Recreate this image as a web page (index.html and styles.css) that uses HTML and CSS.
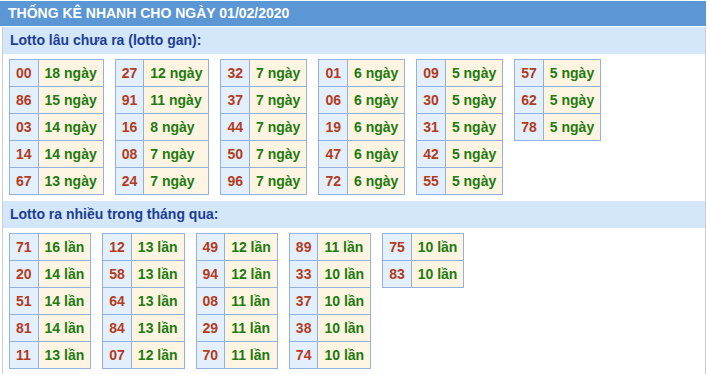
FILE: index.html
```html
<!DOCTYPE html>
<html lang="vi">
<head>
<meta charset="utf-8">
<title>Thống kê nhanh</title>
<link rel="stylesheet" href="styles.css">
</head>
<body>
<div class="header">THỐNG KÊ NHANH CHO NGÀY 01/02/2020</div>
<div class="box">
  <div class="subhead">Lotto lâu chưa ra (lotto gan):</div>
  <div class="grid">
    <table><tr><td class="n">00</td><td class="v">18 ngày</td></tr><tr><td class="n">86</td><td class="v">15 ngày</td></tr><tr><td class="n">03</td><td class="v">14 ngày</td></tr><tr><td class="n">14</td><td class="v">14 ngày</td></tr><tr><td class="n">67</td><td class="v">13 ngày</td></tr></table>
    <table><tr><td class="n">27</td><td class="v">12 ngày</td></tr><tr><td class="n">91</td><td class="v">11 ngày</td></tr><tr><td class="n">16</td><td class="v">8 ngày</td></tr><tr><td class="n">08</td><td class="v">7 ngày</td></tr><tr><td class="n">24</td><td class="v">7 ngày</td></tr></table>
    <table><tr><td class="n">32</td><td class="v">7 ngày</td></tr><tr><td class="n">37</td><td class="v">7 ngày</td></tr><tr><td class="n">44</td><td class="v">7 ngày</td></tr><tr><td class="n">50</td><td class="v">7 ngày</td></tr><tr><td class="n">96</td><td class="v">7 ngày</td></tr></table>
    <table><tr><td class="n">01</td><td class="v">6 ngày</td></tr><tr><td class="n">06</td><td class="v">6 ngày</td></tr><tr><td class="n">19</td><td class="v">6 ngày</td></tr><tr><td class="n">47</td><td class="v">6 ngày</td></tr><tr><td class="n">72</td><td class="v">6 ngày</td></tr></table>
    <table><tr><td class="n">09</td><td class="v">5 ngày</td></tr><tr><td class="n">30</td><td class="v">5 ngày</td></tr><tr><td class="n">31</td><td class="v">5 ngày</td></tr><tr><td class="n">42</td><td class="v">5 ngày</td></tr><tr><td class="n">55</td><td class="v">5 ngày</td></tr></table>
    <table><tr><td class="n">57</td><td class="v">5 ngày</td></tr><tr><td class="n">62</td><td class="v">5 ngày</td></tr><tr><td class="n">78</td><td class="v">5 ngày</td></tr></table>
  </div>
  <div class="subhead">Lotto ra nhiều trong tháng qua:</div>
  <div class="grid">
    <table><tr><td class="n">71</td><td class="v">16 lần</td></tr><tr><td class="n">20</td><td class="v">14 lần</td></tr><tr><td class="n">51</td><td class="v">14 lần</td></tr><tr><td class="n">81</td><td class="v">14 lần</td></tr><tr><td class="n">11</td><td class="v">13 lần</td></tr></table>
    <table><tr><td class="n">12</td><td class="v">13 lần</td></tr><tr><td class="n">58</td><td class="v">13 lần</td></tr><tr><td class="n">64</td><td class="v">13 lần</td></tr><tr><td class="n">84</td><td class="v">13 lần</td></tr><tr><td class="n">07</td><td class="v">12 lần</td></tr></table>
    <table><tr><td class="n">49</td><td class="v">12 lần</td></tr><tr><td class="n">94</td><td class="v">12 lần</td></tr><tr><td class="n">08</td><td class="v">11 lần</td></tr><tr><td class="n">29</td><td class="v">11 lần</td></tr><tr><td class="n">70</td><td class="v">11 lần</td></tr></table>
    <table><tr><td class="n">89</td><td class="v">11 lần</td></tr><tr><td class="n">33</td><td class="v">10 lần</td></tr><tr><td class="n">37</td><td class="v">10 lần</td></tr><tr><td class="n">38</td><td class="v">10 lần</td></tr><tr><td class="n">74</td><td class="v">10 lần</td></tr></table>
    <table><tr><td class="n">75</td><td class="v">10 lần</td></tr><tr><td class="n">83</td><td class="v">10 lần</td></tr></table>
  </div>
</div>
</body>
</html>
```
FILE: styles.css
```css
html, body {
  margin: 0;
  padding: 0;
  background: #ffffff;
}
body {
  font-family: "Liberation Sans", Arial, sans-serif;
  font-size: 14px;
  font-weight: bold;
}
.header {
  margin-top: 1px;
  width: 698px;
  height: 25px;
  line-height: 25px;
  padding-left: 8px;
  background: #5b96d5;
  color: #ffffff;
}
.box {
  margin-top: 1px;
  margin-left: 2px;
  width: 702px;
  border-left: 1px solid #c9ced6;
  border-right: 1px solid #c9ced6;
  padding-bottom: 4px;
}
.subhead {
  height: 27px;
  line-height: 27px;
  padding-left: 7px;
  background: #d4e6fa;
  color: #1c3f92;
}
.grid {
  display: flex;
  align-items: flex-start;
  gap: 11px;
  padding: 5px 6px 6px 6px;
}
table {
  border-collapse: collapse;
}
td {
  height: 26px;
  padding: 0 6px;
  border: 1px solid #93b1de;
  line-height: 26px;
  white-space: nowrap;
}
td.n {
  background: #e4effc;
  color: #b23c1c;
}
td.v {
  background: #fdf4e2;
  color: #1f7a10;
}
```
